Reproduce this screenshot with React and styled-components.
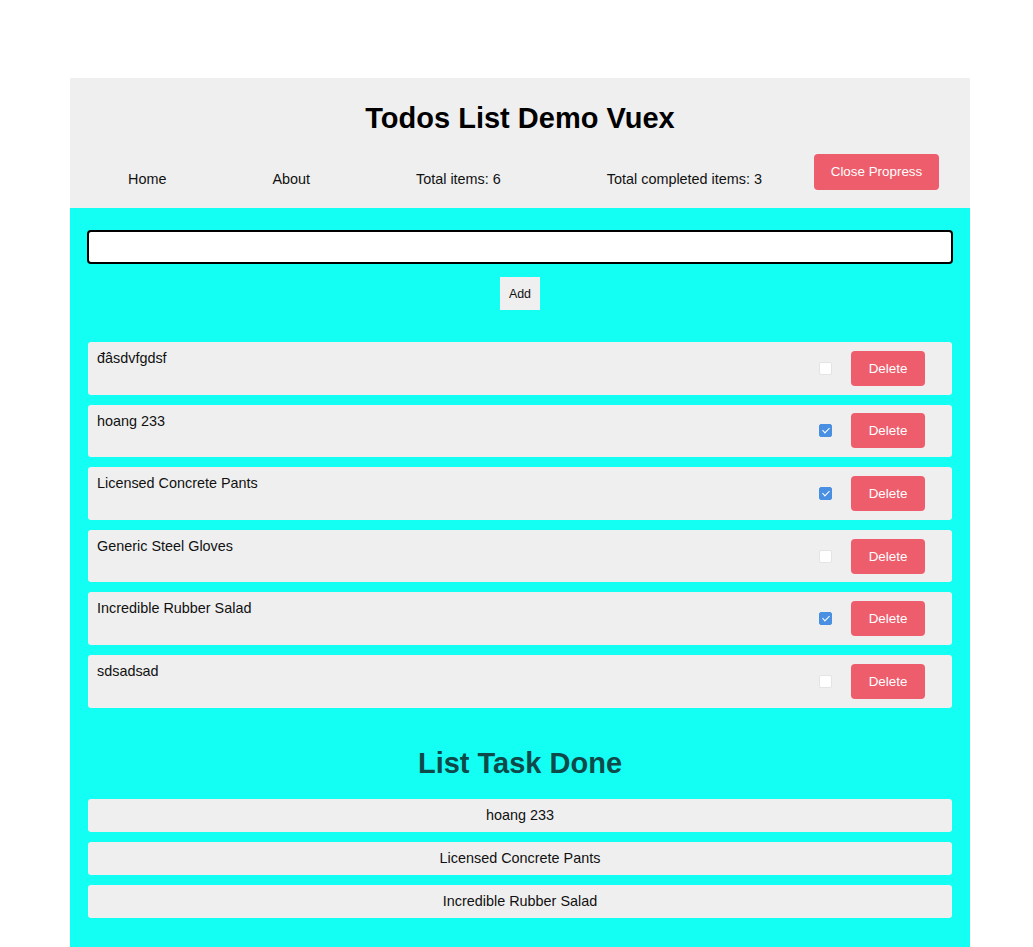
import React from 'react'
import styled, { createGlobalStyle } from 'styled-components'

const GlobalStyle = createGlobalStyle`
  body {
    margin: 0;
    background: #ffffff;
    font-family: "Liberation Sans", Arial, sans-serif;
    color: #111;
  }
`

const todos = [
  { id: 1, title: 'đâsdvfgdsf', done: false },
  { id: 2, title: 'hoang 233', done: true },
  { id: 3, title: 'Licensed Concrete Pants', done: true },
  { id: 4, title: 'Generic Steel Gloves', done: false },
  { id: 5, title: 'Incredible Rubber Salad', done: true },
  { id: 6, title: 'sdsadsad', done: false },
]

const App = () => {
  const doneTodos = todos.filter(t => t.done)
  return (
    <>
      <GlobalStyle />
      <Page>
        <Header>
          <Title>Todos List Demo Vuex</Title>
          <Nav>
            <NavLinks>
              <NavItem>Home</NavItem>
              <NavItem>About</NavItem>
              <NavItem>Total items: {todos.length}</NavItem>
              <NavItem>Total completed items: {doneTodos.length}</NavItem>
            </NavLinks>
            <CloseButton>Close Propress</CloseButton>
          </Nav>
        </Header>
        <Main>
          <TodoInput type="text" />
          <AddRow>
            <AddButton>Add</AddButton>
          </AddRow>
          <TodoList>
            {todos.map(todo => (
              <TodoRow key={todo.id}>
                <TodoText>{todo.title}</TodoText>
                <Check type="checkbox" defaultChecked={todo.done} />
                <DeleteButton>Delete</DeleteButton>
              </TodoRow>
            ))}
          </TodoList>
          <DoneTitle>List Task Done</DoneTitle>
          <DoneList>
            {doneTodos.map(todo => (
              <DoneItem key={todo.id}>{todo.title}</DoneItem>
            ))}
          </DoneList>
        </Main>
      </Page>
    </>
  )
}

const Page = styled.div`
  width: 900px;
  margin: 78px 0 0 70px;
`
const Header = styled.header`
  height: 130px;
  background-color: #efefef;
  display: flex;
  flex-direction: column;
`
const Title = styled.h1`
  margin: 0;
  padding-top: 24px;
  height: 52px;
  font-size: 29px;
  line-height: 32px;
  text-align: center;
  color: #000;
`
const Nav = styled.nav`
  display: flex;
  justify-content: space-between;
  align-items: flex-start;
  padding: 0 31px 0 58px;
`
const NavLinks = styled.div`
  display: flex;
  gap: 106px;
  margin-top: 17px;
`
const NavItem = styled.span`
  white-space: nowrap;
  font-size: 14.4px;
  line-height: 16px;
  color: #111;
`
const CloseButton = styled.button`
  flex-shrink: 0;
  width: 125px;
  height: 36px;
  border: none;
  border-radius: 4px;
  background-color: #ee5d6c;
  color: #fff;
  font-family: "Liberation Sans", Arial, sans-serif;
  font-size: 13.4px;
  padding: 0 0 2px;
`
const Main = styled.main`
  background-color: #13fff3;
  padding: 22px 17px 30px;
`
const TodoInput = styled.input`
  display: block;
  box-sizing: border-box;
  width: 100%;
  height: 34px;
  border: 2px solid #000;
  border-radius: 4px;
  background: #fff;
  outline: none;
`
const AddRow = styled.div`
  display: flex;
  justify-content: center;
  margin-top: 13px;
`
const AddButton = styled.button`
  width: 40px;
  height: 33px;
  border: none;
  background-color: #efefef;
  font-family: "Liberation Sans", Arial, sans-serif;
  font-size: 12.4px;
  color: #111;
  padding: 0;
`
const TodoList = styled.div`
  display: flex;
  flex-direction: column;
  gap: 10px;
  margin: 32px 1px 0;
`
const TodoRow = styled.div`
  display: flex;
  align-items: center;
  height: 52.6px;
  background-color: #efefef;
  border-radius: 3px;
  padding: 0 27px 0 9px;
`
const TodoText = styled.div`
  flex: 1;
  align-self: flex-start;
  padding-top: 8px;
  font-size: 14.4px;
  line-height: 17px;
  color: #111;
`
const Check = styled.input`
  appearance: none;
  position: relative;
  box-sizing: border-box;
  width: 13px;
  height: 13px;
  margin: 0 19px 0 0;
  border: 1px solid #e4e4e4;
  border-radius: 2px;
  background: #fff;

  &:checked {
    background: #4a90e2;
    border-color: #4a90e2;
  }
  &:checked::after {
    content: '';
    position: absolute;
    left: 3.5px;
    top: 1px;
    width: 3px;
    height: 6px;
    border: solid #fff;
    border-width: 0 1.6px 1.6px 0;
    transform: rotate(45deg);
  }
`
const DeleteButton = styled.button`
  width: 74px;
  height: 35px;
  border: none;
  border-radius: 4px;
  background-color: #ee5d6c;
  color: #fff;
  font-family: "Liberation Sans", Arial, sans-serif;
  font-size: 13.4px;
  padding: 0;
`
const DoneTitle = styled.h2`
  margin: 38px 0 0;
  height: 53px;
  font-size: 29px;
  line-height: 34px;
  text-align: center;
  color: #0f4a4a;
`
const DoneList = styled.div`
  display: flex;
  flex-direction: column;
  gap: 10px;
  margin: 0 1px;
`
const DoneItem = styled.div`
  height: 33px;
  line-height: 33px;
  background-color: #efefef;
  border-radius: 3px;
  text-align: center;
  font-size: 14.4px;
  color: #111;
`

export default App
